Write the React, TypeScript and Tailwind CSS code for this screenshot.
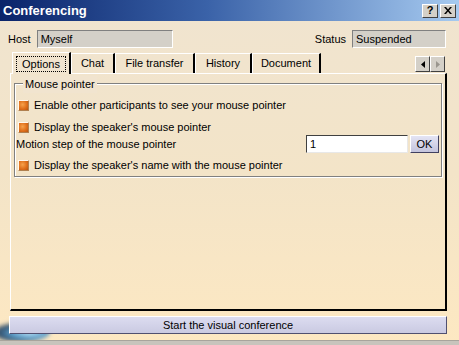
import React from 'react';

const font = { fontFamily: '"Liberation Sans", Arial, sans-serif' };

// orange check square of the dialog
function Check() {
  return (
    <span className="inline-block w-[11px] h-[11px] border border-t-[#fff8ee] border-l-[#fff8ee] border-r-[#b08050] border-b-[#b08050] bg-[radial-gradient(circle_at_40%_40%,#f6a24c_0%,#e0701c_55%,#b85410_100%)] shrink-0" />
  );
}

function Tab({ label, active, w }: { label: string; active?: boolean; w: number }) {
  return (
    <div
      className={`flex items-center justify-center border-l border-t border-white border-r-2 border-r-black ${
        active ? 'h-[22px] -mb-px bg-[#f1e4cf] z-10' : 'h-[20px]'
      }`}
      style={{ width: w }}
    >
      <span className={active ? 'px-[5px] outline outline-1 outline-dotted outline-black leading-[14px]' : ''}>{label}</span>
    </div>
  );
}

export default function App() {
  return (
    <div
      className="w-[459px] h-[345px] flex flex-col text-[11px] text-black bg-[linear-gradient(180deg,#f0e4d0_0%,#f3e4c8_50%,#fde8c2_100%)] relative overflow-hidden"
      style={font}
    >
      {/* wallpaper swoosh at bottom-left, behind the button */}
      <div className="absolute left-[-8px] bottom-[3px] w-[58px] h-[20px] rounded-[50%] blur-[2px] bg-[radial-gradient(ellipse_at_65%_55%,#bfe4f6_0%,#5b9cc8_35%,#2e4a66_60%,transparent_80%)] pointer-events-none" />

      {/* title bar */}
      <div className="relative h-[21px] flex items-center justify-between pl-[3px] pr-[3px] bg-[linear-gradient(90deg,#0a246a_0%,#3a62a8_45%,#a6caf0_100%)]">
        <span className="text-white font-bold text-[13px]">Conferencing</span>
        <div className="flex gap-[2px]">
          <div className="w-[16px] h-[14px] bg-[#d4d0c8] border border-t-white border-l-white border-r-[#404040] border-b-[#404040] flex items-center justify-center font-bold text-[11px] leading-none">?</div>
          <div className="w-[16px] h-[14px] bg-[#d4d0c8] border border-t-white border-l-white border-r-[#404040] border-b-[#404040] flex items-center justify-center">
            <svg width="8" height="7" viewBox="0 0 8 7"><path d="M0 0h2l2 2.5L6 0h2L5 3.5 8 7H6L4 4.5 2 7H0l3-3.5z" fill="#000" /></svg>
          </div>
        </div>
      </div>

      {/* host / status */}
      <div className="mt-[9px] h-[18px] flex items-center pl-[8px]">
        <span>Host</span>
        <div className="ml-[6px] w-[136px] h-[18px] bg-[#d4d0c8] border border-t-[#808080] border-l-[#808080] border-b-white border-r-white flex items-center pl-[3px]">Myself</div>
        <span className="ml-auto">Status</span>
        <div className="ml-[6px] mr-[13px] w-[94px] h-[18px] bg-[#d4d0c8] border border-t-[#808080] border-l-[#808080] border-b-white border-r-white flex items-center pl-[3px]">Suspended</div>
      </div>

      {/* tabs */}
      <div className="mt-[3px] ml-[12px] flex items-end h-[22px] relative">
        <Tab label="Options" active w={59} />
        <Tab label="Chat" w={44} />
        <Tab label="File transfer" w={80} />
        <Tab label="History" w={57} />
        <Tab label="Document" w={69} />
        <div className="ml-auto mr-[14px] mb-[1px] flex">
          <div className="w-[15px] h-[16px] bg-[#d4d0c8] border border-t-white border-l-white border-r-[#404040] border-b-[#404040] flex items-center justify-center">
            <svg width="4" height="7" viewBox="0 0 4 7"><path d="M4 0v7L0 3.5z" fill="#000" /></svg>
          </div>
          <div className="w-[15px] h-[16px] bg-[#d4d0c8] border border-t-white border-l-white border-r-[#404040] border-b-[#404040] flex items-center justify-center">
            <svg width="4" height="7" viewBox="0 0 4 7"><path d="M0 0v7l4-3.5z" fill="#9a968e" /></svg>
          </div>
        </div>
      </div>

      {/* tab panel */}
      <div className="ml-[10px] w-[437px] h-[238px] border-l border-t border-white border-r-2 border-b-2 border-r-black border-b-black pt-[9px] px-[3px]">
        <div className="relative h-[94px] border border-[#808080] shadow-[inset_1px_1px_0_#fff,1px_1px_0_#fff] pt-[13px] pl-[3px] pr-[2px]">
          <span className="absolute -top-[8px] left-[8px] px-[2px] bg-[#f1e4cf]">Mouse pointer</span>
          <div className="flex items-center gap-[5px] h-[16px]">
            <Check />
            <span>Enable other participants to see your mouse pointer</span>
          </div>
          <div className="flex items-center gap-[5px] h-[16px] mt-[6px]">
            <Check />
            <span>Display the speaker's mouse pointer</span>
          </div>
          <div className="flex items-center h-[18px] -ml-[2px]">
            <span>Motion step of the mouse pointer</span>
            <div className="ml-auto w-[102px] h-[18px] bg-white border border-t-[#404040] border-l-[#404040] border-b-[#e8e8e8] border-r-[#e8e8e8] flex items-center pl-[3px]">1</div>
            <div className="ml-[2px] w-[29px] h-[18px] bg-[linear-gradient(180deg,#e4e4f4,#c4c4dc)] border border-t-white border-l-white border-r-[#404060] border-b-[#404060] flex items-center justify-center">OK</div>
          </div>
          <div className="flex items-center gap-[5px] h-[16px] mt-[4px]">
            <Check />
            <span>Display the speaker's name with the mouse pointer</span>
          </div>
        </div>
      </div>

      {/* main action */}
      <div className="relative mt-[5px] ml-[9px] w-[438px] h-[18px] bg-[linear-gradient(180deg,#dcdcf0,#cacae2)] border border-t-white border-l-white border-r-[#505070] border-b-[#505070] flex items-center justify-center">
        Start the visual conference
      </div>

      <div className="relative mt-auto h-[5px] bg-[#c8c4bc] border-t border-[#a8a49c]" />
    </div>
  );
}
